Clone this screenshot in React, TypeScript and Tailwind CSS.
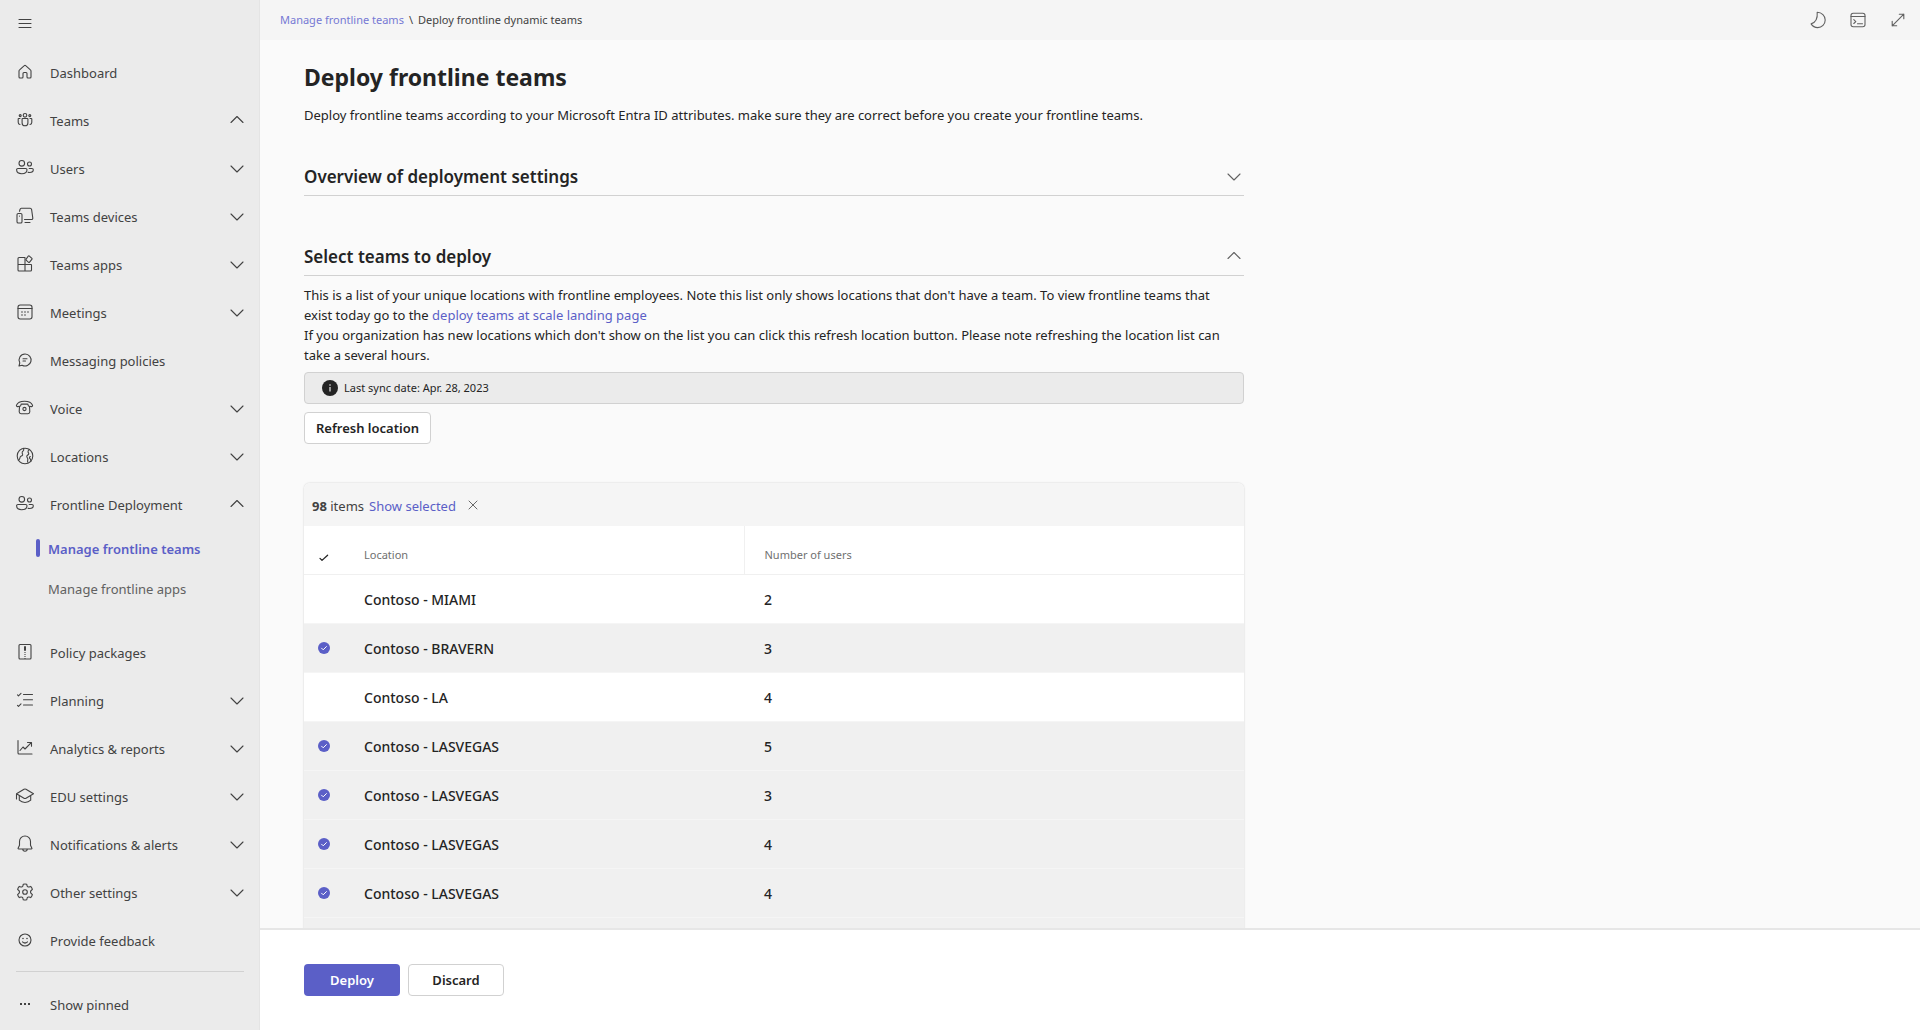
import { useState, type ReactNode } from "react";

type IconProps = { children: ReactNode; className?: string };

function Icon({ children, className = "size-5" }: IconProps) {
  return (
    <svg
      viewBox="0 0 20 20"
      className={`${className} shrink-0`}
      fill="none"
      stroke="currentColor"
      strokeWidth="1.1"
      strokeLinecap="round"
      strokeLinejoin="round"
      aria-hidden="true"
    >
      {children}
    </svg>
  );
}

const glyphs: Record<string, ReactNode> = {
  home: (
    <path d="M4 9.1c0-.5.2-.9.6-1.200l4.700-4.200a1 1 0 0 1 1.400 0l4.700 4.200c.4.300.6.700.6 1.200V15a1 1 0 0 1-1 1h-2a1 1 0 0 1-1-1v-3.500a1 1 0 0 0-1-1H9a1 1 0 0 0-1 1V15a1 1 0 0 1-1 1H5a1 1 0 0 1-1-1z" />
  ),
  teams: (
    <>
      <circle cx="10" cy="5.300" r="1.800" />
      <circle cx="5.200" cy="5.600" r="1" />
      <circle cx="14.800" cy="5.600" r="1" />
      <path d="M7.600 8.500h4.800c.3 0 .5.2.5.500v3.900a2.900 2.900 0 0 1-5.800 0V9c0-.3.2-.5.5-.500z" />
      <path d="M5 8.500H3.800a.6.6 0 0 0-.6.6v3.100c0 1.400.7 2.100 1.800 2.300M15 8.500h1.200c.3 0 .6.3.6.6v3.100c0 1.400-.7 2.100-1.800 2.300" />
    </>
  ),
  users: (
    <>
      <circle cx="6.800" cy="5.300" r="2.800" />
      <circle cx="14.500" cy="6" r="2" />
      <path d="M3 10.500h7.700a1.300 1.300 0 0 1 1.300 1.300c0 2.800-2 3.900-5.200 3.900s-5.200-1.100-5.200-3.900A1.300 1.300 0 0 1 3 10.500z" />
      <path d="M14.200 10.500h2.800a1.300 1.300 0 0 1 1.300 1.300c0 2-1.300 2.700-3.600 2.700-.6 0-1.100 0-1.600-.1" />
    </>
  ),
  devices: (
    <>
      <path d="M4.500 5.300 5 3.500c.2-.7.700-1.200 1.400-1.200h8.800c.7 0 1.200.5 1.400 1.200l1.200 8.500c.1.900-.5 1.500-1.300 1.500H9.500M10 16.500h5" />
      <rect x="2" y="7.500" width="5" height="9.500" rx="1.300" />
      <path d="M4.500 10v.1" />
    </>
  ),
  apps: (
    <>
      <path d="M10 3.500H4a1 1 0 0 0-1 1V16a1 1 0 0 0 1 1h11.500a1 1 0 0 0 1-1v-5a.5.5 0 0 0-.5-.500H3M10 3.500V17" />
      <path d="m14.100 1.900 2.800 2.500a.6.6 0 0 1 .1.800l-2.600 3.100a.6.6 0 0 1-.8.1l-2.500-2.200a.6.6 0 0 1-.1-.8l2.300-3.400a.6.6 0 0 1 .8-.1z" />
    </>
  ),
  calendar: (
    <>
      <rect x="3" y="3" width="14" height="14" rx="2.200" />
      <path d="M3 6.500h14" />
      <path strokeWidth="1.600" d="M7 10v.01M10 10v.01M13 10v.01M7 13v.01M10 13v.01" />
    </>
  ),
  chat: (
    <>
      <path d="M10 4a6 6 0 1 1-2.900 11.200L4 16l.8-3.100A6 6 0 0 1 10 4z" />
      <path d="M8 8.800h4M8 11h2.500" />
    </>
  ),
  phone: (
    <>
      <path d="M1.500 7.200C2.500 4.600 5.600 3.300 9.500 3.300s7 1.300 8 3.900c.3.800-.3 1.500-1.100 1.400l-2.300-.4c-.6-.1-1-.6-1-1.200 0-.5-.3-.9-.8-.9H6.700c-.5 0-.8.4-.8.9 0 .6-.4 1.100-1 1.200l-2.300.4c-.8.1-1.400-.6-1.100-1.400z" />
      <path d="m4.500 8.500-.3 5.300c0 1 .8 1.900 1.900 1.900h6.800c1.100 0 1.900-.9 1.900-1.900l-.3-5.300" />
      <circle cx="9.500" cy="11" r="1.600" />
    </>
  ),
  globe: (
    <>
      <circle cx="10" cy="10" r="7.800" />
      <path d="M3.200 14.200c1.600-.3 1.500-1.900 1.900-3 .4-1.200 2.100-1 2.500-2.200.3-1-.8-1.700-.4-2.800.3-.9 1.300-1.200 1.500-2.200.1-.7-.1-1.200-.3-1.700" />
      <path d="M14.500 3.400c-.9.600-1.700 1.400-1.500 2.400.2.800 1 1.300.7 2.200-.3 1-1.700 1-1.900 2.200-.2 1.300.9 1.700 1 2.900.1 1.100-.5 1.700-.1 3.100M16 15.200c-.4-1-.2-1.800-1-2.500s-.7-1.700.3-2.200" />
    </>
  ),
  policy: (
    <>
      <rect x="4" y="2.500" width="12" height="14.500" rx="1" />
      <path strokeWidth="2" d="M10 5v3" />
      <path strokeDasharray="1 1" strokeLinecap="butt" d="M10 10v7" />
    </>
  ),
  planning: (
    <path d="M8.500 4.500h9M8.500 9.800h9M8.500 15h9M2.500 4.800l1 1L6 3.300M2.500 15.300l1 1L6 13.800" />
  ),
  analytics: (
    <path d="M3 2.500v12.500a1 1 0 0 0 1 1h13M5 12.500 8 9l2 2 6-6.200M12.500 4.500H16.500V8.300" />
  ),
  cap: (
    <>
      <path d="M9 3.300a2 2 0 0 1 2 0l7.500 4.500-7.500 4.400a2 2 0 0 1-2 0L1.500 7.800zM1.500 7.800V13" />
      <path d="M4.300 9.700v4.500c1.500 1.500 3.400 2.300 5.700 2.300s4.200-.8 5.700-2.300V9.700" />
    </>
  ),
  bell: (
    <path d="M10 2c3.200 0 5.500 2.500 5.500 5.600v3.600l1.400 3c.2.500-.1.800-.5.800H3.600c-.4 0-.7-.3-.5-.8l1.400-3V7.600C4.500 4.500 6.800 2 10 2zM7.700 15c.1 1.400 1 2.200 2.300 2.200s2.200-.8 2.300-2.200" />
  ),
  gear: (
    <>
      <circle cx="10" cy="10" r="2.300" />
      <path d="M8.300 2.200a8 8 0 0 1 3.400 0l.4 1.600c.2.900 1.100 1.400 2 1.100l1.600-.5a8 8 0 0 1 1.700 3l-1.200 1.100a2 2 0 0 0 0 3l1.200 1.100a8 8 0 0 1-1.700 3l-1.600-.5c-.9-.3-1.800.2-2 1.100l-.4 1.600a8 8 0 0 1-3.400 0l-.4-1.600c-.2-.9-1.100-1.400-2-1.100l-1.600.5a8 8 0 0 1-1.700-3l1.200-1.100a2 2 0 0 0 0-3L2.600 7.400a8 8 0 0 1 1.700-3l1.600.5c.9.3 1.800-.2 2-1.100z" />
    </>
  ),
  smile: (
    <>
      <circle cx="10" cy="10" r="6" />
      <path d="M7.500 11.800c1.400 1.400 3.600 1.400 5 0" />
      <path strokeWidth="1.600" d="M8 8.500v.01M12 8.500v.01" />
    </>
  ),
  dots: <path strokeWidth="2" strokeLinecap="butt" d="M5 10h2M9 10h2M13 10h2" />,
};

function Chevron({ up }: { up?: boolean }) {
  return (
    <Icon>
      {up ? <path d="m4 12.500 6-6 6 6" /> : <path d="m4 8 6 6 6-6" />}
    </Icon>
  );
}

type NavEntry = {
  label: string;
  icon: string;
  expand?: "up" | "down";
  children?: { label: string; active?: boolean }[];
};

const nav: NavEntry[] = [
  { label: "Dashboard", icon: "home" },
  { label: "Teams", icon: "teams", expand: "up" },
  { label: "Users", icon: "users", expand: "down" },
  { label: "Teams devices", icon: "devices", expand: "down" },
  { label: "Teams apps", icon: "apps", expand: "down" },
  { label: "Meetings", icon: "calendar", expand: "down" },
  { label: "Messaging policies", icon: "chat" },
  { label: "Voice", icon: "phone", expand: "down" },
  { label: "Locations", icon: "globe", expand: "down" },
  {
    label: "Frontline Deployment",
    icon: "users",
    expand: "up",
    children: [
      { label: "Manage frontline teams", active: true },
      { label: "Manage frontline apps" },
    ],
  },
  { label: "Policy packages", icon: "policy" },
  { label: "Planning", icon: "planning", expand: "down" },
  { label: "Analytics & reports", icon: "analytics", expand: "down" },
  { label: "EDU settings", icon: "cap", expand: "down" },
  { label: "Notifications & alerts", icon: "bell", expand: "down" },
  { label: "Other settings", icon: "gear", expand: "down" },
  { label: "Provide feedback", icon: "smile" },
];

function NavRow({ item }: { item: NavEntry }) {
  return (
    <button type="button" className="flex h-12 w-full items-center pr-3 pl-[15px] text-left">
      <Icon>{glyphs[item.icon]}</Icon>
      <span className="ml-[15px] flex-1 pt-0.5">{item.label}</span>
      {item.expand && <Chevron up={item.expand === "up"} />}
    </button>
  );
}

function Sidebar() {
  return (
    <nav
      aria-label="Main"
      className="w-[260px] shrink-0 overflow-hidden border-r border-[#e4e4e4] bg-[#ebebeb] text-[#424242]"
    >
      <button type="button" aria-label="Toggle navigation" className="flex h-12 items-center px-[15px]">
        <Icon>
          <path d="M4 5.500h12M4 9.500h12M4 13.500h12" />
        </Icon>
      </button>
      <ul>
        {nav.map((item) => (
          <li key={item.label}>
            <NavRow item={item} />
            {item.children && (
              <ul className="pb-5 pl-9">
                {item.children.map((c) => (
                  <li key={c.label} className="flex h-10 items-center">
                    <span
                      className={c.active ? "h-[18px] w-1 rounded-sm bg-[#5b5fc7]" : "h-[18px] w-1"}
                    />
                    <a
                      href="#"
                      className={
                        c.active
                          ? "ml-2 pt-0.5 font-semibold text-[#5b5fc7]"
                          : "ml-2 pt-0.5 text-[#616161]"
                      }
                    >
                      {c.label}
                    </a>
                  </li>
                ))}
              </ul>
            )}
          </li>
        ))}
      </ul>
      <hr className="mr-[15px] ml-4 mt-[7px] mb-2 border-[#d1d1d1]" />
      <NavRow item={{ label: "Show pinned", icon: "dots" }} />
    </nav>
  );
}

function TopBar() {
  return (
    <header className="flex h-10 shrink-0 items-center justify-between bg-[#f5f5f5] pr-3 pl-5">
      <div className="flex gap-[5px] text-[11px] text-[#424242]">
        <a href="#" className="text-[#7579d4]">
          Manage frontline teams
        </a>
        <span>\</span>
        <span>Deploy frontline dynamic teams</span>
      </div>
      <div className="flex gap-5 text-[#616161]">
        <button type="button" aria-label="Dark mode">
          <Icon>
            <path d="M9.200 2.300c4.600.2 8 3.500 8 7.800 0 4.200-3.300 7.500-7.500 7.500-2.700 0-5.200-1.400-6.600-3.700 4.200-1.300 6.700-5 6.100-11.600z" />
          </Icon>
        </button>
        <button type="button" aria-label="Console">
          <Icon>
            <rect x="3" y="3.300" width="14" height="13.500" rx="2.200" />
            <path d="M3 6.500h14M5.800 9.700l2 1.900-2 1.900M9.500 13.800h5" />
          </Icon>
        </button>
        <button type="button" aria-label="Full screen">
          <Icon>
            <path d="M4.200 15.800 15.800 4.200M11.300 4.200h4.500v4.500M4.200 11.300v4.500h4.500" />
          </Icon>
        </button>
      </div>
    </header>
  );
}

function SectionHeader({ title, open }: { title: string; open?: boolean }) {
  return (
    <button
      type="button"
      aria-expanded={!!open}
      className="flex h-10 w-full items-center justify-between border-b border-[#d1d1d1] text-left text-[#242424]"
    >
      <h2 className="pt-0.5 text-[17px] font-semibold">{title}</h2>
      <span className="text-[#616161]">
        <Chevron up={open} />
      </span>
    </button>
  );
}

const locations = [
  { name: "Contoso - MIAMI", users: 2, selected: false },
  { name: "Contoso - BRAVERN", users: 3, selected: true },
  { name: "Contoso - LA", users: 4, selected: false },
  { name: "Contoso - LASVEGAS", users: 5, selected: true },
  { name: "Contoso - LASVEGAS", users: 3, selected: true },
  { name: "Contoso - LASVEGAS", users: 4, selected: true },
  { name: "Contoso - LASVEGAS", users: 4, selected: true },
  { name: "Contoso - LASVEGAS", users: 4, selected: true },
];

function LocationTable() {
  const [selected, setSelected] = useState(locations.map((l) => l.selected));
  return (
    <div className="mt-[39px] rounded-t-md bg-white shadow-[0_0_2px_rgba(0,0,0,0.2)]">
      <div className="flex h-[43px] items-center gap-[5px] rounded-t-md bg-[#f5f5f5] px-2 pt-0.5 text-[#424242]">
        <span>
          <b>98</b> items
        </span>
        <a href="#" className="text-[#5b5fc7]">
          Show selected
        </a>
        <button type="button" aria-label="Clear selection" className="ml-1 pb-0.5 text-[#616161]">
          <Icon className="size-4">
            <path strokeWidth="1.200" d="m5 5 10 10M15 5 5 15" />
          </Icon>
        </button>
      </div>
      <table className="w-full table-fixed text-left text-[#242424]">
        <thead>
          <tr className="h-12 border-b border-[#f0f0f0] text-[11px] text-[#707070]">
            <th className="w-11 pt-4 pl-3 font-normal text-[#242424]" aria-label="Selected">
              <Icon className="size-4">
                <path strokeWidth="1.600" d="m5 10.500 2.500 2.500 7-6.500" />
              </Icon>
            </th>
            <th className="w-[396px] border-r border-[#f0f0f0] pt-2.5 pl-4 font-normal">Location</th>
            <th className="pt-2.5 pl-5 font-normal">Number of users</th>
          </tr>
        </thead>
        <tbody>
          {locations.map((l, i) => (
            <tr
              key={i}
              className={
                selected[i]
                  ? "h-[49px] border-b border-[#f5f5f5] bg-[#f0f0f0]"
                  : "h-[49px] border-b border-[#f5f5f5] bg-white"
              }
            >
              <td className="pl-3.5">
                <label className="block size-3">
                  <input
                    type="checkbox"
                    aria-label={l.name}
                    checked={selected[i]}
                    onChange={() => setSelected(selected.map((s, j) => (j === i ? !s : s)))}
                    className="peer sr-only"
                  />
                  <svg viewBox="0 0 12 12" className="hidden size-3 peer-checked:block" aria-hidden="true">
                    <circle cx="6" cy="6" r="6" fill="#5b5fc7" />
                    <path d="m3.600 6.200 1.600 1.600 3.200-3.200" fill="none" stroke="#fff" strokeLinecap="round" />
                  </svg>
                </label>
              </td>
              <td className="pt-0.5 pl-4 text-sm font-medium">{l.name}</td>
              <td className="pt-0.5 pl-5 text-sm font-medium">{l.users}</td>
            </tr>
          ))}
        </tbody>
      </table>
    </div>
  );
}

export default function App() {
  return (
    <div className="flex h-screen overflow-hidden bg-[#fafafa] font-['Noto_Sans',sans-serif] text-[13px] leading-5 text-[#242424]">
      <Sidebar />
      <div className="flex min-w-0 flex-1 flex-col">
        <TopBar />
        <main className="min-h-0 flex-1 overflow-y-auto pl-11 [scrollbar-width:none]">
          <div className="max-w-[940px]">
            <h1 className="pt-[21px] text-[23px] leading-8 font-bold">Deploy frontline teams</h1>
            <p className="mt-3">
              Deploy frontline teams according to your Microsoft Entra ID attributes. make sure they are
              correct before you create your frontline teams.
            </p>
            <div className="mt-[31px]">
              <SectionHeader title="Overview of deployment settings" />
            </div>
            <div className="mt-10">
              <SectionHeader title="Select teams to deploy" open />
            </div>
            <p className="mt-[9px] pr-2">
              This is a list of your unique locations with frontline employees. Note this list only shows
              locations that don't have a team. To view frontline teams that exist today go to the{" "}
              <a href="#" className="text-[#5b5fc7]">
                deploy teams at scale landing page
              </a>
              <br />
              If you organization has new locations which don't show on the list you can click this refresh
              location button. Please note refreshing the location list can take a several hours.
            </p>
            <div className="mt-[7px] flex h-8 items-center gap-1.5 rounded border border-[#d1d1d1] bg-[#ebebeb] pl-[17px] text-[11px]">
              <svg viewBox="0 0 16 16" className="size-4" aria-hidden="true">
                <circle cx="8" cy="8" r="8" fill="#242424" />
                <path d="M8 7v4.500" stroke="#ebebeb" strokeWidth="1.200" />
                <circle cx="8" cy="5" r=".8" fill="#ebebeb" />
              </svg>
              Last sync date: Apr. 28, 2023
            </div>
            <button
              type="button"
              className="mt-2 h-8 w-[127px] rounded border border-[#d1d1d1] bg-white font-semibold"
            >
              Refresh location
            </button>
            <LocationTable />
          </div>
        </main>
        <footer className="flex h-[102px] shrink-0 items-start gap-2 border-t-2 border-[#e6e6e6] bg-white pt-[34px] pl-11 font-semibold">
          <button type="button" className="h-8 w-24 rounded bg-[#5b5fc7] text-white">
            Deploy
          </button>
          <button type="button" className="h-8 w-24 rounded border border-[#d1d1d1] bg-white">
            Discard
          </button>
        </footer>
      </div>
    </div>
  );
}
